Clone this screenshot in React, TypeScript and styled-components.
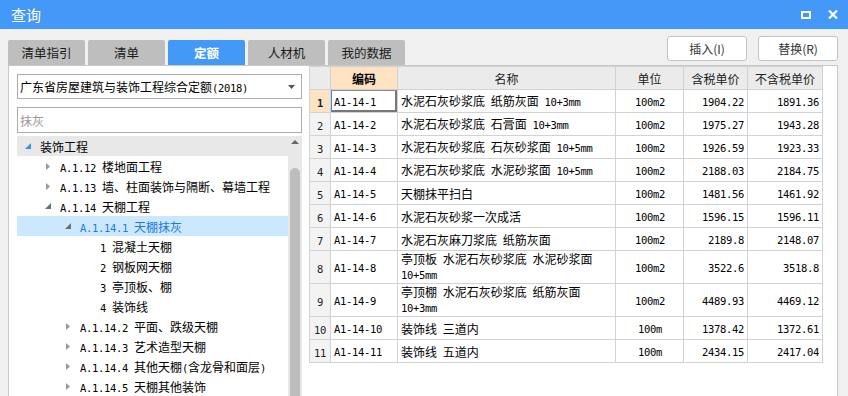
import React from "react";
import styled, { createGlobalStyle } from "styled-components";

const GlobalStyle = createGlobalStyle`
  html, body { margin: 0; padding: 0; }
  body {
    font-family: "Noto Sans CJK SC", "Noto Sans", sans-serif;
    background: #f0f0f0;
  }
  * { box-sizing: border-box; }
`;

const LATIN = /([0-9A-Za-z+.()]+)/;

const Code = styled.span`
  font-family: "DejaVu Sans Mono", "Liberation Mono", monospace;
  font-size: 10.5px;
  letter-spacing: -0.32px;
`;

const mixed = (s: string) =>
  s.split(LATIN).map((p, i) =>
    /^[0-9A-Za-z+.()]+$/.test(p) ? <Code key={i}>{p}</Code> : <React.Fragment key={i}>{p}</React.Fragment>
  );

const Window = styled.div`
  width: 848px;
  height: 396px;
  overflow: hidden;
  background: #f0f0f0;
  display: flex;
  flex-direction: column;
`;

const TitleBar = styled.div`
  height: 29px;
  flex: none;
  background: #4398f8;
  display: flex;
  align-items: center;
  padding: 0 10px 0 11px;
  color: #fff;
`;

const Title = styled.div`
  flex: 1;
  font-size: 15px;
  line-height: 29px;
`;

const TitleButtons = styled.div`
  display: flex;
  align-items: center;
  gap: 17px;
`;

const Toolbar = styled.div`
  height: 36px;
  flex: none;
  display: flex;
  align-items: flex-end;
  justify-content: space-between;
  padding: 0 10px 0 8px;
`;

const Tabs = styled.div`
  display: flex;
  gap: 3px;
`;

const Tab = styled.div<{ $active?: boolean }>`
  width: 77px;
  height: 25px;
  border-radius: 2px 2px 0 0;
  background: ${(p) => (p.$active ? "#4399f8" : "#bebebe")};
  color: ${(p) => (p.$active ? "#fff" : "#1a1a1a")};
  font-weight: ${(p) => (p.$active ? 700 : 400)};
  font-size: 12.5px;
  display: flex;
  align-items: center;
  justify-content: center;
`;

const Buttons = styled.div`
  align-self: flex-start;
  margin-top: 7px;
  display: flex;
  gap: 11px;
`;

const Button = styled.button`
  width: 80px;
  height: 25px;
  background: #fff;
  border: 1px solid #c4c4c4;
  border-radius: 3px;
  font-family: "Noto Sans CJK SC", sans-serif;
  font-size: 12px;
  color: #333;
  padding: 0;
`;

const Main = styled.div`
  flex: 1;
  min-height: 0;
  display: flex;
  margin: 0 10px 0 8px;
  background: #fff;
  border: 1px solid #c8c8c8;
  border-bottom: none;
`;

const LeftPanel = styled.div`
  width: 300px;
  flex: none;
  display: flex;
  flex-direction: column;
  padding: 8px 7px 0 8px;
`;

const Select = styled.div`
  height: 25px;
  border: 1px solid #acacac;
  display: flex;
  align-items: center;
  padding: 0 6px 0 2px;
  font-size: 12px;
  color: #000;
`;

const SelectText = styled.div`
  flex: 1;
  white-space: nowrap;
`;

const Search = styled.input`
  margin-top: 8px;
  height: 26px;
  border: 1px solid #acacac;
  padding: 0 2px;
  font-family: "Noto Sans CJK SC", sans-serif;
  font-size: 12px;
  outline: none;
  &::placeholder { color: #9a9a9a; }
`;

const Tree = styled.div`
  margin-top: 3px;
  flex: 1;
  display: flex;
  min-height: 0;
  overflow: hidden;
`;

const TreeList = styled.div`
  flex: 1;
`;

const TreeRow = styled.div<{ $level: number; $variant?: "head" | "selected" }>`
  height: 20px;
  display: flex;
  align-items: center;
  gap: 4px;
  padding-left: ${(p) => 3 + p.$level * 20}px;
  font-size: 12px;
  white-space: nowrap;
  background: ${(p) => (p.$variant === "head" ? "#e8e8e8" : p.$variant === "selected" ? "#cce8ff" : "transparent")};
  color: ${(p) => (p.$variant === "selected" ? "#1c7ae2" : "#000")};
`;

const Expander = styled.span`
  width: 16px;
  height: 20px;
  display: flex;
  align-items: center;
  justify-content: center;
  flex: none;
`;

const Label = styled.span`
  display: flex;
  align-items: baseline;
  gap: 6px;
`;

const ScrollTrack = styled.div`
  width: 14px;
  flex: none;
  background: #e8e8e8;
  display: flex;
  flex-direction: column;
  align-items: center;
`;

const ScrollArrow = styled.div`
  margin-top: 4px;
  width: 0;
  height: 0;
  border-left: 4px solid transparent;
  border-right: 4px solid transparent;
  border-bottom: 4px solid #666;
`;

const ScrollThumb = styled.div`
  margin-top: 24px;
  width: 10px;
  flex: 1;
  background: #bdbdbd;
  border-radius: 5px 5px 0 0;
`;

const RightPanel = styled.div`
  flex: 1;
  background: #fff;
`;

const Table = styled.table`
  border-collapse: collapse;
  table-layout: fixed;
  width: 513px;
  font-size: 12px;
  color: #000;
`;

const HeadCell = styled.th<{ $accent?: boolean }>`
  height: 23px;
  padding: 0;
  border: 1px solid #d2d2d2;
  background: ${(p) => (p.$accent ? "#fde3c2" : "#ebebeb")};
  font-weight: ${(p) => (p.$accent ? 700 : 400)};
  color: ${(p) => (p.$accent ? "#000" : "#222")};
  text-align: center;
`;

const Row = styled.tr<{ $tall?: boolean }>`
  height: ${(p) => (p.$tall ? 33 : 23)}px;
`;

const RowHead = styled.td<{ $active?: boolean }>`
  padding: 0;
  border: 1px solid #d2d2d2;
  background: ${(p) => (p.$active ? "#fde3c2" : "#f3f3f3")};
  font-weight: ${(p) => (p.$active ? 700 : 400)};
  text-align: center;
  color: #222;
`;

const Cell = styled.td<{ $align?: "left" | "center" | "right"; $focus?: boolean }>`
  padding: 0 ${(p) => (p.$align === "right" ? 3 : 2)}px 0 3px;
  border: 1px solid #d2d2d2;
  text-align: ${(p) => p.$align || "left"};
  vertical-align: middle;
  line-height: 15px;
  white-space: pre-line;
  word-spacing: 3px;
  box-shadow: ${(p) =>
    p.$focus ? "inset 1px 0 0 #3c8ee8, inset 0 1px 0 #8a8a8a, inset -2px 0 0 #777, inset 0 -2px 0 #777" : "none"};
`;

const Tri = ({ color }: { color: string }) => (
  <svg width="6" height="6" viewBox="0 0 6 6">
    <polygon points="6,0 6,6 0,6" fill={color} />
  </svg>
);

const Arrow = () => (
  <svg width="4" height="7" viewBox="0 0 4 7">
    <polygon points="0,0 4,3.5 0,7" fill="#999" />
  </svg>
);

type Node = {
  level: number;
  code?: string;
  name: string;
  state?: "open" | "closed";
  variant?: "head" | "selected";
  blue?: boolean;
};

const tree: Node[] = [
  { level: 0, name: "装饰工程", state: "open", variant: "head", blue: true },
  { level: 1, code: "A.1.12", name: "楼地面工程", state: "closed" },
  { level: 1, code: "A.1.13", name: "墙、柱面装饰与隔断、幕墙工程", state: "closed" },
  { level: 1, code: "A.1.14", name: "天棚工程", state: "open" },
  { level: 2, code: "A.1.14.1", name: "天棚抹灰", state: "open", variant: "selected" },
  { level: 3, code: "1", name: "混凝土天棚" },
  { level: 3, code: "2", name: "钢板网天棚" },
  { level: 3, code: "3", name: "亭顶板、棚" },
  { level: 3, code: "4", name: "装饰线" },
  { level: 2, code: "A.1.14.2", name: "平面、跌级天棚", state: "closed" },
  { level: 2, code: "A.1.14.3", name: "艺术造型天棚", state: "closed" },
  { level: 2, code: "A.1.14.4", name: "其他天棚(含龙骨和面层)", state: "closed" },
  { level: 2, code: "A.1.14.5", name: "天棚其他装饰", state: "closed" },
];

const rows: string[][] = [
  ["A1-14-1", "水泥石灰砂浆底 纸筋灰面 10+3mm", "100m2", "1904.22", "1891.36"],
  ["A1-14-2", "水泥石灰砂浆底 石膏面 10+3mm", "100m2", "1975.27", "1943.28"],
  ["A1-14-3", "水泥石灰砂浆底 石灰砂浆面 10+5mm", "100m2", "1926.59", "1923.33"],
  ["A1-14-4", "水泥石灰砂浆底 水泥砂浆面 10+5mm", "100m2", "2188.03", "2184.75"],
  ["A1-14-5", "天棚抹平扫白", "100m2", "1481.56", "1461.92"],
  ["A1-14-6", "水泥石灰砂浆一次成活", "100m2", "1596.15", "1596.11"],
  ["A1-14-7", "水泥石灰麻刀浆底 纸筋灰面", "100m2", "2189.8", "2148.07"],
  ["A1-14-8", "亭顶板 水泥石灰砂浆底 水泥砂浆面\n10+5mm", "100m2", "3522.6", "3518.8"],
  ["A1-14-9", "亭顶棚 水泥石灰砂浆底 纸筋灰面\n10+3mm", "100m2", "4489.93", "4469.12"],
  ["A1-14-10", "装饰线 三道内", "100m", "1378.42", "1372.61"],
  ["A1-14-11", "装饰线 五道内", "100m", "2434.15", "2417.04"],
];

export default function App() {
  return (
    <>
      <GlobalStyle />
      <Window>
        <TitleBar>
          <Title>查询</Title>
          <TitleButtons>
            <svg width="10" height="8" viewBox="0 0 10 8">
              <rect x="1" y="1" width="8" height="6" fill="none" stroke="#fff" strokeWidth="2" />
            </svg>
            <svg width="10" height="9" viewBox="0 0 10 9">
              <path d="M1 0.5 L9 8.5 M9 0.5 L1 8.5" stroke="#fff" strokeWidth="2.2" />
            </svg>
          </TitleButtons>
        </TitleBar>
        <Toolbar>
          <Tabs>
            <Tab>清单指引</Tab>
            <Tab>清单</Tab>
            <Tab $active>定额</Tab>
            <Tab>人材机</Tab>
            <Tab>我的数据</Tab>
          </Tabs>
          <Buttons>
            <Button>插入(I)</Button>
            <Button>替换(R)</Button>
          </Buttons>
        </Toolbar>
        <Main>
          <LeftPanel>
            <Select>
              <SelectText>{mixed("广东省房屋建筑与装饰工程综合定额(2018)")}</SelectText>
              <svg width="7" height="4" viewBox="0 0 7 4">
                <polygon points="0,0 7,0 3.5,4" fill="#555" />
              </svg>
            </Select>
            <Search placeholder="抹灰" />
            <Tree>
              <TreeList>
                {tree.map((n, i) => (
                  <TreeRow key={i} $level={n.level} $variant={n.variant}>
                    <Expander>
                      {n.state === "open" && <Tri color={n.blue ? "#3f8ee8" : "#6e6e6e"} />}
                      {n.state === "closed" && <Arrow />}
                    </Expander>
                    <Label>
                      {n.code && <Code>{n.code}</Code>}
                      <span>{mixed(n.name)}</span>
                    </Label>
                  </TreeRow>
                ))}
              </TreeList>
              <ScrollTrack>
                <ScrollArrow />
                <ScrollThumb />
              </ScrollTrack>
            </Tree>
          </LeftPanel>
          <RightPanel>
            <Table>
              <colgroup>
                <col style={{ width: 21 }} />
                <col style={{ width: 67 }} />
                <col style={{ width: 218 }} />
                <col style={{ width: 68 }} />
                <col style={{ width: 64 }} />
                <col style={{ width: 75 }} />
              </colgroup>
              <thead>
                <tr>
                  <HeadCell />
                  <HeadCell $accent>编码</HeadCell>
                  <HeadCell>名称</HeadCell>
                  <HeadCell>单位</HeadCell>
                  <HeadCell>含税单价</HeadCell>
                  <HeadCell>不含税单价</HeadCell>
                </tr>
              </thead>
              <tbody>
                {rows.map((r, i) => (
                  <Row key={i} $tall={r[1].includes("\n")}>
                    <RowHead $active={i === 0}>
                      <Code>{i + 1}</Code>
                    </RowHead>
                    <Cell $focus={i === 0}>
                      <Code>{r[0]}</Code>
                    </Cell>
                    <Cell>{mixed(r[1])}</Cell>
                    <Cell $align="center">
                      <Code>{r[2]}</Code>
                    </Cell>
                    <Cell $align="right">
                      <Code>{r[3]}</Code>
                    </Cell>
                    <Cell $align="right">
                      <Code>{r[4]}</Code>
                    </Cell>
                  </Row>
                ))}
              </tbody>
            </Table>
          </RightPanel>
        </Main>
      </Window>
    </>
  );
}
